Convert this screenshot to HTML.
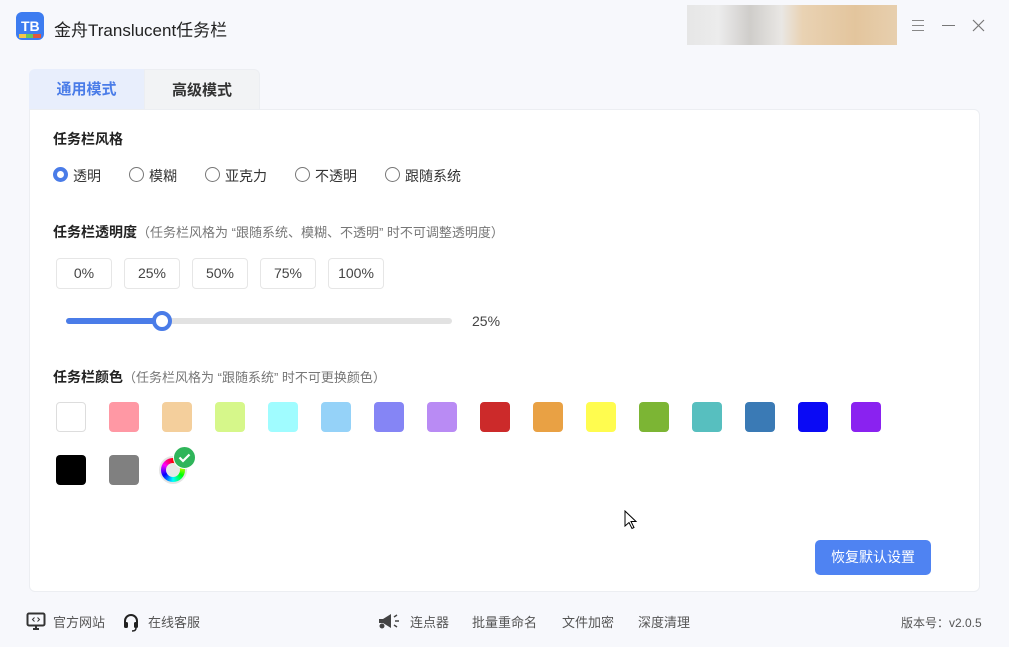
<!DOCTYPE html>
<html><head><meta charset="utf-8"><style>
*{margin:0;padding:0;box-sizing:border-box}
body{width:1009px;height:647px;background:#f7f8fc;font-family:"Liberation Sans","Noto Sans CJK SC",sans-serif;position:relative;overflow:hidden;color:#333}
.a{position:absolute}
.t{font-size:14px;white-space:nowrap}
.radio{position:absolute;width:15px;height:15px;border:1px solid #777;border-radius:50%;top:167px}
.pct{position:absolute;top:258px;height:31px;border:1px solid #e6e6e6;border-radius:4px;background:#fff;font-size:14px;text-align:center;line-height:29px;color:#444}
.sw{position:absolute;width:30px;height:30px;border-radius:4px}
.f{position:absolute;top:612px;font-size:13px;color:#555;white-space:nowrap}
</style></head><body>
<svg class="a" style="left:16px;top:12px" width="28" height="28" viewBox="0 0 28 28"><rect width="28" height="28" rx="6" fill="#3d7cf0"/><rect x="3" y="22" width="7" height="4" fill="#f2c64a"/><rect x="10" y="22" width="7" height="4" fill="#6bc65a"/><rect x="17" y="22" width="8" height="4" fill="#e0573f"/><text x="5" y="19" font-size="14" font-weight="bold" fill="#fff" font-family="Liberation Sans">TB</text></svg>
<div class="a" style="left:54px;top:16px;font-size:17px;color:#222">金舟Translucent任务栏</div>
<div class="a" style="left:687px;top:5px;width:210px;height:40px;background:linear-gradient(90deg,#e6e6e6 0%,#ececec 15%,#cfcdca 30%,#e9e7e4 45%,#e9d2b3 55%,#e3c59d 80%,#e7cfae 100%)"></div>
<div class="a" style="left:912px;top:20px;width:12px;height:11px;border-top:1px solid #888;border-bottom:1px solid #888"></div>
<div class="a" style="left:912px;top:25px;width:12px;height:1px;background:#888"></div>
<div class="a" style="left:942px;top:25px;width:13px;height:1px;background:#777"></div>
<svg class="a" style="left:972px;top:19px" width="13" height="13"><path d="M1 1L12 12M12 1L1 12" stroke="#777" stroke-width="1.2"/></svg>
<div class="a" style="left:29px;top:69px;width:115px;height:41px;background:#e8eefc;border-radius:6px 0 0 0;font-size:15px;font-weight:bold;color:#4a7ce8;text-align:center;line-height:41px">通用模式</div>
<div class="a" style="left:144px;top:69px;width:116px;height:41px;background:#f2f3f5;border:1px solid #eceef2;border-bottom:none;border-radius:0 6px 0 0;font-size:15px;font-weight:bold;color:#333;text-align:center;line-height:41px">高级模式</div>
<div class="a" style="left:29px;top:109px;width:951px;height:483px;background:#fff;border:1px solid #eceef2;border-radius:0 6px 6px 6px"></div>
<div class="a" style="left:53px;top:129px;font-size:14px;font-weight:bold;color:#222">任务栏风格</div>
<div class="radio" style="left:53px;border:4px solid #4a7ce8"></div><div class="a t" style="left:73px;top:166px">透明</div>
<div class="radio" style="left:129px"></div><div class="a t" style="left:149px;top:166px">模糊</div>
<div class="radio" style="left:205px"></div><div class="a t" style="left:225px;top:166px">亚克力</div>
<div class="radio" style="left:295px"></div><div class="a t" style="left:315px;top:166px">不透明</div>
<div class="radio" style="left:385px"></div><div class="a t" style="left:405px;top:166px">跟随系统</div>
<div class="a" style="left:53px;top:222px;white-space:nowrap"><b style="font-size:14px;color:#222">任务栏透明度</b><span style="font-size:13px;color:#777">（任务栏风格为 “跟随系统、模糊、不透明” 时不可调整透明度）</span></div>
<div class="pct" style="left:56px;width:56px">0%</div>
<div class="pct" style="left:124px;width:56px">25%</div>
<div class="pct" style="left:192px;width:56px">50%</div>
<div class="pct" style="left:260px;width:56px">75%</div>
<div class="pct" style="left:328px;width:56px">100%</div>
<div class="a" style="left:66px;top:318px;width:386px;height:6px;border-radius:3px;background:#e2e2e2"></div>
<div class="a" style="left:66px;top:318px;width:96px;height:6px;border-radius:3px;background:#4a7ce8"></div>
<div class="a" style="left:152px;top:311px;width:20px;height:20px;border-radius:50%;background:#fff;border:4px solid #4a7ce8"></div>
<div class="a t" style="left:472px;top:313px;color:#444">25%</div>
<div class="a" style="left:53px;top:367px;white-space:nowrap"><b style="font-size:14px;color:#222">任务栏颜色</b><span style="font-size:13px;color:#777">（任务栏风格为 “跟随系统” 时不可更换颜色）</span></div>
<div class="sw" style="left:56px;top:402px;background:#fff;border:1px solid #ddd"></div>
<div class="sw" style="left:109px;top:402px;background:#ff98a4"></div>
<div class="sw" style="left:162px;top:402px;background:#f4cf9c"></div>
<div class="sw" style="left:215px;top:402px;background:#d6f78a"></div>
<div class="sw" style="left:268px;top:402px;background:#a0fcff"></div>
<div class="sw" style="left:321px;top:402px;background:#95d2f8"></div>
<div class="sw" style="left:374px;top:402px;background:#8585f5"></div>
<div class="sw" style="left:427px;top:402px;background:#b98bf4"></div>
<div class="sw" style="left:480px;top:402px;background:#cc2a2a"></div>
<div class="sw" style="left:533px;top:402px;background:#e9a144"></div>
<div class="sw" style="left:586px;top:402px;background:#fffc4f"></div>
<div class="sw" style="left:639px;top:402px;background:#7cb534"></div>
<div class="sw" style="left:692px;top:402px;background:#57bfbf"></div>
<div class="sw" style="left:745px;top:402px;background:#3a7ab5"></div>
<div class="sw" style="left:798px;top:402px;background:#0a0af5"></div>
<div class="sw" style="left:851px;top:402px;background:#8a22f0"></div>
<div class="sw" style="left:56px;top:455px;background:#000"></div>
<div class="sw" style="left:109px;top:455px;background:#808080"></div>
<div class="a" style="left:159px;top:456px;width:28px;height:28px;border-radius:50%;background:conic-gradient(#f00,#ff0,#0f0,#0ff,#00f,#f0f,#f00);border:2px solid #e4e4e4"></div>
<div class="a" style="left:166px;top:463px;width:14px;height:14px;border-radius:50%;background:#e8e8e8"></div>
<svg class="a" style="left:173px;top:446px" width="23" height="23"><circle cx="11.5" cy="11.5" r="11" fill="#2fb55a" stroke="#fff" stroke-width="1"/><path d="M6.5 11.5l3.5 3.5 6.5-6.5" stroke="#fff" stroke-width="2.2" fill="none"/></svg>
<svg class="a" style="left:624px;top:510px" width="14" height="20"><path d="M1 1v15l4-3.5 3 6 2-1-3-6h5z" fill="#fff" stroke="#000" stroke-width="1"/></svg>
<div class="a" style="left:815px;top:540px;width:116px;height:35px;background:#4f83f2;border-radius:5px;color:#fff;font-size:14px;text-align:center;line-height:35px">恢复默认设置</div>
<svg class="a" style="left:26px;top:612px" width="20" height="18"><rect x="1.5" y="1.5" width="17" height="12" rx="1.5" fill="none" stroke="#333" stroke-width="2"/><path d="M7 17h6M10 13v4" stroke="#333" stroke-width="2"/><path d="M8.5 5.5l-2 2 2 2M11.5 5.5l2 2-2 2" stroke="#333" stroke-width="1" fill="none"/></svg>
<div class="f" style="left:53px">官方网站</div>
<svg class="a" style="left:122px;top:612px" width="18" height="20"><path d="M3 11V9a6 6 0 0112 0v2" stroke="#222" stroke-width="2" fill="none"/><rect x="2" y="10" width="4" height="6" rx="1.5" fill="#222"/><rect x="12" y="10" width="4" height="6" rx="1.5" fill="#222"/><path d="M14 16q0 3-4 3" stroke="#222" stroke-width="1.5" fill="none"/></svg>
<div class="f" style="left:148px">在线客服</div>
<svg class="a" style="left:377px;top:611px" width="24" height="20"><path d="M2 8h4l8-5v14l-8-5H2z" fill="#444"/><circle cx="5" cy="15" r="2.5" fill="#444"/><path d="M17 6l3-2M18 10h4M17 14l3 2" stroke="#444" stroke-width="1.5"/></svg>
<div class="f" style="left:410px">连点器</div>
<div class="f" style="left:472px">批量重命名</div>
<div class="f" style="left:562px">文件加密</div>
<div class="f" style="left:638px">深度清理</div>
<div class="f" style="left:901px;font-size:12px;top:614px">版本号：v2.0.5</div>
</body></html>
